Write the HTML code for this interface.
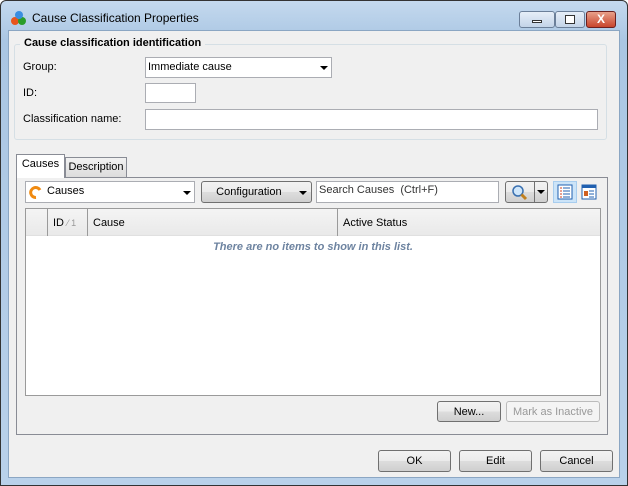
<html><head><style>
*{box-sizing:border-box}
body{margin:0;width:628px;height:486px;overflow:hidden;font-family:"Liberation Sans",sans-serif;font-size:11px;color:#000}
.a{position:absolute}
.win{left:0;top:0;width:628px;height:486px;background:#b4cde6;border:1px solid #333;border-radius:6px 6px 0 0;background:linear-gradient(#c4d9ee,#aac6e3 40px,#b9d1ea)}
.client{left:8px;top:30px;width:612px;height:448px;background:#f0f0f0;border:1px solid #8ba6c3}
.inp{background:#fff;border:1px solid #abadb3}
.btn{border:1px solid #707070;border-radius:3px;background:linear-gradient(#f2f2f2,#ebebeb 50%,#dddddd 51%,#cfcfcf);text-align:center;line-height:20px}
.tri{width:0;height:0;border-left:4px solid transparent;border-right:4px solid transparent;border-top:4px solid #000}
</style></head><body>
<div class="a win"></div>
<svg class="a" style="left:10px;top:10px" width="18" height="16"><circle cx="5" cy="11" r="4" fill="#e8541c"/><circle cx="12" cy="11" r="4" fill="#2a9d2a"/><circle cx="9" cy="5" r="4" fill="#3a8ee0"/></svg>
<div class="a" style="left:32px;top:11px;font-size:12px">Cause Classification Properties</div>
<div class="a" style="left:519px;top:11px;width:36px;height:17px;border:1px solid #6b7f99;border-radius:3px;background:linear-gradient(#e6eef8,#c3d4e8)"><div class="a" style="left:12px;top:8px;width:10px;height:3px;border:1px solid #333;background:#fff"></div></div>
<div class="a" style="left:555px;top:11px;width:30px;height:17px;border:1px solid #6b7f99;border-radius:3px;background:linear-gradient(#e6eef8,#c3d4e8)"><div class="a" style="left:9px;top:3px;width:10px;height:9px;border:1px solid #333;background:#fff"></div></div>
<div class="a" style="left:586px;top:11px;width:30px;height:17px;border:1px solid #6b2020;border-radius:3px;background:linear-gradient(#e8a08a,#c8452c);color:#fff;font-weight:bold;text-align:center;line-height:15px;font-size:12px">X</div>
<div class="a client"></div>
<div class="a" style="left:14px;top:44px;width:593px;height:96px;border:1px solid #d5dfe5;border-radius:3px"></div>
<div class="a" style="left:20px;top:37px;background:#f0f0f0;padding:0 4px;font-weight:bold">Cause classification identification</div>
<div class="a" style="left:23px;top:61px">Group:</div>
<div class="a inp" style="left:145px;top:57px;width:187px;height:21px"><span class="a" style="left:2px;top:3px">Immediate cause</span><div class="a tri" style="left:174px;top:8px"></div></div>
<div class="a" style="left:23px;top:87px">ID:</div>
<div class="a inp" style="left:145px;top:83px;width:51px;height:20px"></div>
<div class="a" style="left:23px;top:113px">Classification name:</div>
<div class="a inp" style="left:145px;top:109px;width:453px;height:21px"></div>
<div class="a" style="left:16px;top:177px;width:592px;height:258px;border:1px solid #898c95;background:#fff;background:#f0f0f0"></div>
<div class="a" style="left:16px;top:154px;width:49px;height:24px;border:1px solid #898c95;border-bottom:none;background:#fff;text-align:center;line-height:18px">Causes</div>
<div class="a" style="left:65px;top:157px;width:62px;height:20px;border:1px solid #898c95;border-bottom:none;background:linear-gradient(#f2f2f2,#dcdcdc);text-align:center;line-height:18px">Description</div>
<div class="a inp" style="left:25px;top:181px;width:170px;height:22px"><svg class="a" style="left:3px;top:4px" width="14" height="13"><path d="M11 4A5 5 0 1 0 7 11.5" stroke="#f08a10" stroke-width="3" fill="none"/></svg><span class="a" style="left:21px;top:3px">Causes</span><div class="a tri" style="left:157px;top:9px"></div></div>
<div class="a btn" style="left:201px;top:181px;width:111px;height:22px">Configuration&nbsp;&nbsp;&nbsp;&nbsp;&nbsp;<div class="a tri" style="left:97px;top:9px"></div></div>
<div class="a inp" style="left:316px;top:181px;width:183px;height:22px"><span class="a" style="left:2px;top:2px;color:#333">Search Causes&nbsp; (Ctrl+F)</span></div>
<div class="a btn" style="left:505px;top:181px;width:43px;height:22px"><svg class="a" style="left:5px;top:2px" width="18" height="18"><circle cx="7" cy="7" r="5" fill="#cfe6fa" stroke="#3a70b0" stroke-width="1.5"/><path d="M10.5 10.5L15 15" stroke="#c08020" stroke-width="3"/></svg><div class="a" style="left:28px;top:0;height:20px;border-left:1px solid #707070"></div><div class="a tri" style="left:31px;top:8px"></div></div>
<div class="a" style="left:553px;top:181px;width:24px;height:22px;background:#cce4f8;border:1px solid #a8cdee"></div>
<svg class="a" style="left:557px;top:184px" width="16" height="16"><rect x="1" y="1" width="14" height="14" fill="#fff" stroke="#2060b0"/><path d="M3 4h2M3 7h2M3 10h2M3 13h2" stroke="#d04020"/><path d="M6 4h7M6 7h7M6 10h7M6 13h7" stroke="#2060b0"/></svg>
<svg class="a" style="left:581px;top:184px" width="16" height="16"><rect x="1" y="1" width="14" height="14" fill="#fff" stroke="#2060b0"/><rect x="1" y="1" width="14" height="3" fill="#2060b0"/><rect x="3" y="7" width="4" height="5" fill="#d06020"/><path d="M8 7h5M8 10h5M8 13h5" stroke="#2060b0"/></svg>
<div class="a" style="left:25px;top:208px;width:576px;height:188px;border:1px solid #9a9a9a;background:#fff"></div>
<div class="a" style="left:26px;top:209px;width:574px;height:27px;background:linear-gradient(#f4f4f4,#e9e9e9);border-bottom:1px solid #e0e0e0"></div>
<div class="a" style="left:47px;top:209px;height:27px;border-left:1px solid #9a9a9a"></div>
<div class="a" style="left:87px;top:209px;height:27px;border-left:1px solid #9a9a9a"></div>
<div class="a" style="left:337px;top:209px;height:27px;border-left:1px solid #9a9a9a"></div>
<div class="a" style="left:53px;top:217px">ID <span style="color:#999;font-size:9px">⁄ 1</span></div>
<div class="a" style="left:93px;top:217px">Cause</div>
<div class="a" style="left:343px;top:217px">Active Status</div>
<div class="a" style="left:26px;top:241px;width:574px;text-align:center;color:#6d83a0;font-weight:bold;font-style:italic">There are no items to show in this list.</div>
<div class="a btn" style="left:437px;top:401px;width:64px;height:21px">New...</div>
<div class="a btn" style="left:506px;top:401px;width:94px;height:21px;border-color:#bbb;background:#f4f4f4;color:#999">Mark as Inactive</div>
<div class="a btn" style="left:378px;top:450px;width:73px;height:22px">OK</div>
<div class="a btn" style="left:459px;top:450px;width:73px;height:22px">Edit</div>
<div class="a btn" style="left:540px;top:450px;width:73px;height:22px">Cancel</div>
</body></html>
